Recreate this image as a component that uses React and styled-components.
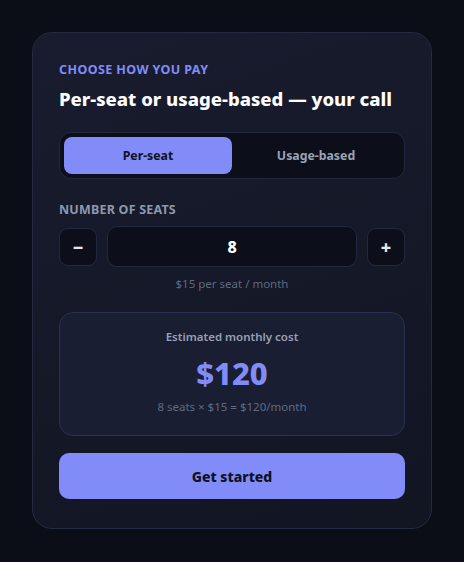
import React, { useState } from "react";
import styled, { createGlobalStyle } from "styled-components";

const GlobalStyle = createGlobalStyle`
  html, body {
    margin: 0;
    background: #0c0e17;
    font-family: "Noto Sans", "Open Sans", sans-serif;
  }
`;

const Page = styled.div`
  min-height: 100vh;
  padding: 32px;
  box-sizing: border-box;
  background: #0c0e17;
`;

const Card = styled.div`
  background: linear-gradient(160deg, #181c2e 0%, #121522 100%);
  border: 1px solid #242a40;
  border-radius: 20px;
  padding: 28px 26px 29px;
  display: flex;
  flex-direction: column;
`;

const Eyebrow = styled.div`
  font-size: 12.5px;
  font-weight: 700;
  letter-spacing: 0.4px;
  color: #818cf8;
  text-transform: uppercase;
  line-height: 18px;
`;

const Title = styled.h2`
  margin: 7px 0 0;
  font-size: 18.5px;
  font-weight: 800;
  color: #ffffff;
  line-height: 26px;
`;

const Toggle = styled.div`
  margin-top: 20px;
  display: grid;
  grid-template-columns: 1fr 1fr;
  padding: 4px;
  background: #0c0f1a;
  border: 1px solid #232840;
  border-radius: 12px;
`;

const ToggleButton = styled.button`
  height: 37px;
  border: none;
  border-radius: 8px;
  font-family: inherit;
  font-size: 12.3px;
  font-weight: 700;
  cursor: pointer;
  background: ${(p) => (p.$active ? "#818cf8" : "transparent")};
  color: ${(p) => (p.$active ? "#0f1220" : "#9aa3b5")};
`;

const SectionLabel = styled.div`
  margin-top: 22px;
  font-size: 12.5px;
  font-weight: 700;
  letter-spacing: 0.2px;
  color: #8e98ad;
  text-transform: uppercase;
  line-height: 18px;
`;

const Stepper = styled.div`
  margin-top: 7px;
  display: flex;
  align-items: center;
  gap: 10px;
`;

const StepButton = styled.button`
  width: 38px;
  height: 38px;
  flex: none;
  border: 1px solid #232840;
  border-radius: 9px;
  background: #0c0f1a;
  color: #e5e7f0;
  font-family: inherit;
  font-size: 18px;
  font-weight: 800;
  display: flex;
  align-items: center;
  justify-content: center;
  padding: 0;
  cursor: pointer;
`;

const SeatInput = styled.div`
  flex: 1;
  height: 41px;
  box-sizing: border-box;
  border: 1px solid #232840;
  border-radius: 10px;
  background: #0c0f1a;
  color: #ffffff;
  font-size: 16px;
  font-weight: 800;
  display: flex;
  align-items: center;
  justify-content: center;
`;

const Hint = styled.div`
  margin-top: 8px;
  text-align: center;
  font-size: 11.5px;
  color: #5f6b80;
  line-height: 18px;
`;

const Summary = styled.div`
  margin-top: 19px;
  padding: 15px 20px 19px;
  border: 1px solid #2a3050;
  border-radius: 14px;
  background: #1a1e33;
  display: flex;
  flex-direction: column;
  align-items: center;
`;

const SummaryLabel = styled.div`
  font-size: 11.5px;
  font-weight: 600;
  color: #97a0b4;
  line-height: 18px;
`;

const Amount = styled.div`
  margin-top: 7px;
  font-size: 31px;
  font-weight: 800;
  color: #818cf8;
  line-height: 40px;
`;

const Formula = styled.div`
  margin-top: 5px;
  font-size: 11.5px;
  color: #5f6b80;
  line-height: 18px;
`;

const Cta = styled.button`
  margin-top: 17px;
  height: 46px;
  border: none;
  border-radius: 10px;
  background: #818cf8;
  color: #0f1220;
  font-family: inherit;
  font-size: 14px;
  font-weight: 800;
  cursor: pointer;
`;

export default function App() {
  const [mode, setMode] = useState("seat");
  const [seats, setSeats] = useState(8);
  const price = 15;

  return (
    <Page>
      <GlobalStyle />
      <Card>
        <Eyebrow>Choose how you pay</Eyebrow>
        <Title>Per-seat or usage-based — your call</Title>
        <Toggle>
          <ToggleButton $active={mode === "seat"} onClick={() => setMode("seat")}>
            Per-seat
          </ToggleButton>
          <ToggleButton $active={mode === "usage"} onClick={() => setMode("usage")}>
            Usage-based
          </ToggleButton>
        </Toggle>
        <SectionLabel>Number of seats</SectionLabel>
        <Stepper>
          <StepButton onClick={() => setSeats(Math.max(1, seats - 1))}>−</StepButton>
          <SeatInput>{seats}</SeatInput>
          <StepButton onClick={() => setSeats(seats + 1)}>+</StepButton>
        </Stepper>
        <Hint>${price} per seat / month</Hint>
        <Summary>
          <SummaryLabel>Estimated monthly cost</SummaryLabel>
          <Amount>${seats * price}</Amount>
          <Formula>
            {seats} seats × ${price} = ${seats * price}/month
          </Formula>
        </Summary>
        <Cta>Get started</Cta>
      </Card>
    </Page>
  );
}
